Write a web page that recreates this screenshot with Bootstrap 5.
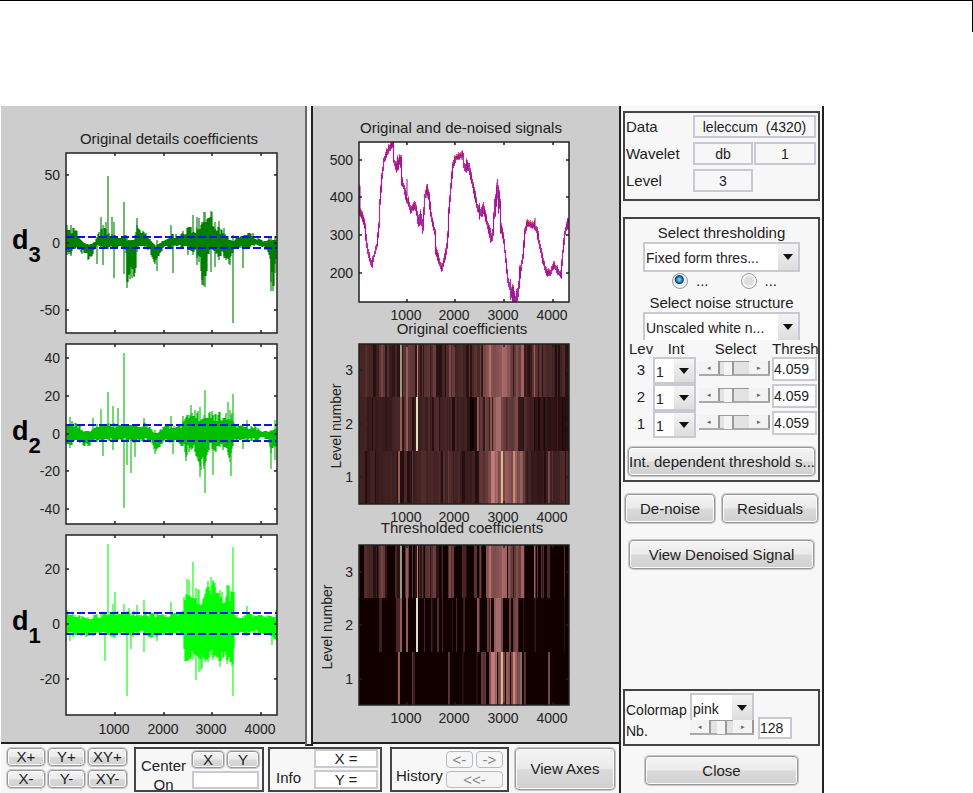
<!DOCTYPE html>
<html lang="en">
<head>
<meta charset="utf-8">
<meta name="viewport" content="width=device-width, initial-scale=1">
<title>Wavelet 1-D De-noising</title>
<link href="https://cdn.jsdelivr.net/npm/bootstrap@5.3.0/dist/css/bootstrap.min.css" rel="stylesheet">
<style>
body{font-family:"Liberation Sans",Arial,sans-serif;font-size:15px;line-height:18px;color:#222;background:#fff}
.page-rule{height:32px;border-top:1px solid #000;border-right:1px solid #000;margin-bottom:74px}
.tool{margin:0 149px 0 1px}
.work-area{min-width:0}
.plots{background:#cdcdcd}
.plots svg{display:block;width:100%;height:auto}
.plot-col-a{flex:304 1 0;min-width:0}
.plot-col-b{flex:306 1 0;min-width:0}
.splitter{flex:0 0 8px;background:#f7f7f7;border:solid #222;border-width:0 2px 2px;border-left-color:#666;margin-bottom:-4px;z-index:1}
.chart text{font-size:14px;fill:#222}
.chart .chart-title{font-size:15px;text-anchor:middle}
.chart .big{font-size:27px;font-weight:bold;fill:#000}
.side{flex:0 0 205px;min-width:0;background:#f7f7f7;border:solid #222;border-width:0 2px;padding:5px 2px 8px 2px}
.frame{border:2px solid #444}
.toolbar-row{background:#f7f7f7;border-top:2px solid #222;padding:3px 4px 2px 5px;height:51px}
.toolbar-row .frame{height:45px}
.mbtn{border:1px solid #999;border-radius:4px;box-shadow:inset 0 0 0 1px #fcfcfc,0 0 0 1px #c8c8c8;background:linear-gradient(#f4f4f4,#ebebeb 48%,#dadada 52%,#d0d0d0);color:#222;padding:0 4px;font-size:15px;line-height:16px;white-space:nowrap;text-align:center}
.mbtn:disabled{background:#f5f5f5;border-color:#b5bcc2;box-shadow:none;color:#888}
.h-sm{height:18px}
.h-lg{height:29px}
.pad-grid{display:grid;grid-template-columns:38px 37px 39px;gap:4px 3px;width:122px;padding:1px}
.fld{border:2px solid #c9c9d3;background:#fff;color:#222;font-size:15px;line-height:16px;padding:0 2px;min-width:0;border-radius:0}
.fld-flat{background:#f7f7f7;font-size:14px;text-align:center;height:23px}
.info-grid{display:grid;grid-template-columns:66px 60px 62px;row-gap:4px;column-gap:1px;align-items:center;padding:2px 0 7px 1px}
.info-grid .wide{grid-column:2/4}
.pop{appearance:none;border:2px solid #c9c9d3;color:#222;font-size:14px;line-height:18px;padding:2px 20px 0 1px;border-radius:0;
background:url("data:image/svg+xml,%3Csvg xmlns='http://www.w3.org/2000/svg' viewBox='0 0 10 6'%3E%3Cpath d='M0 0h10L5 6z' fill='%23111'/%3E%3C/svg%3E") right 5px center/10px 6px no-repeat,linear-gradient(#f4f4f4,#ddd) right/20px 100% no-repeat,#fff}
.pop-lg{width:157px;height:30px}
.pop-clip{height:28px;border-bottom-width:0}
.pop-sm{width:43px;height:27px;display:block}
.lev{width:188px;table-layout:fixed;margin-left:4px}
.lev th{font-weight:400;padding:0;height:17px;line-height:16px}
.lev td{padding:0;height:27px;vertical-align:top}
.lev .fld{width:45px;height:24px;font-size:14px;padding:0}
.lev .step{margin-top:4px}
.step{display:flex;height:15px;width:71px;border-bottom:2px solid #aaa}
.step button{border:0;background:#f3f3f3;width:21px;padding:0;font-size:7px;line-height:12px;color:#666;border-right:2px solid #999}
.step input{appearance:none;width:29px;height:13px;margin:0;background:#e3e3e3;border-top:1px solid #999}
.step input::-webkit-slider-thumb{appearance:none;width:10px;height:13px;background:#f4f4f4;border-right:2px solid #999;border-radius:0}
.radio-row{height:18px;gap:8px;padding-left:47px}
.radio-row input{appearance:none;width:16px;height:16px;margin:0;border:1px solid #999;border-radius:50%;background:radial-gradient(circle,#ddd 0 4px,#f8f8f8 6px)}
.radio-row input:checked{background:radial-gradient(circle at 45% 40%,#6cc8ee 0 1px,#1672a8 3px,#123f5e 4px,#eee 5px)}
.radio-row label{line-height:16px}
.center-box{width:130px;margin-left:6px;padding:2px 3px 0 5px;justify-content:space-between}
.center-box label{line-height:19px;padding-top:5px}
.pair-grid{display:grid;gap:3px}
.center-box .pair-grid{grid-template-columns:32px 32px;grid-template-rows:17px 18px}
.center-box .mbtn,.hist-box .mbtn{line-height:14px;padding:0}
.center-box .fld{grid-column:1/3;width:100%}
.info-box{width:114px;margin-left:4px;padding:0 2px 0 6px}
.info-box span,.hist-box span{padding-bottom:3px}
.info-box .d-flex{gap:2px;padding-bottom:1px}
.info-box .fld{width:64px;height:19px}
.hist-box{width:119px;margin-left:8px;padding:0 4px 2px 4px}
.hist-box .pair-grid{grid-template-columns:27px 27px;grid-template-rows:17px 17px}
.hist-box .wide-btn{grid-column:1/3}
.view-axes{height:42px;margin:1px 0 0 6px}
.thr-frame{margin-top:16px;padding:5px 0 4px;height:265px}
.noise-label{margin-top:4px}
.wide-label{margin:auto 3px 0;overflow:hidden}
.act-row{gap:7px;margin:12px 2px 0}
.act-row .mbtn{flex-basis:0}
.view-sig{margin:17px 6px 0}
.cm-frame{height:57px;padding:2px 0 0 1px}
.cm-grid{display:grid;grid-template-columns:62px 63px 34px;column-gap:2px}
.cm-grid .pop{width:64px;height:29px}
.cm-grid label{font-size:14px}
.cm-grid .step{width:64px;margin-top:-2px}
.cm-grid .step input{width:22px}
.cm-grid .fld{width:34px;height:22px;margin:-5px 0 0 3px;font-size:14px;padding:0}
.close-btn{margin:10px 22px 0}
</style>
</head>
<body>
<div class="page-rule"></div>
<main class="tool d-flex align-items-stretch">
  <div class="work-area flex-grow-1 d-flex flex-column">
    <section class="plots d-flex align-items-stretch" aria-label="Plots">
      <div class="plot-col-a"><svg id="details" class="chart" viewBox="1 106 304 636" role="img" aria-label="Details coefficients"></svg></div>
      <div class="splitter"></div>
      <div class="plot-col-b"><svg id="signals" class="chart" viewBox="313 106 306 636" role="img" aria-label="Signals and coefficients"></svg></div>
    </section>
    <div class="toolbar-row d-flex align-items-start">
      <div class="pad-grid flex-shrink-0">
        <button class="mbtn h-sm">X+</button><button class="mbtn h-sm">Y+</button><button class="mbtn h-sm px-0">XY+</button>
        <button class="mbtn h-sm">X-</button><button class="mbtn h-sm">Y-</button><button class="mbtn h-sm px-0">XY-</button>
      </div>
      <div class="frame center-box d-flex">
        <label for="centerOn" class="text-center">Center<br>On</label>
        <div class="pair-grid"><button class="mbtn">X</button><button class="mbtn">Y</button><input id="centerOn" class="fld"></div>
      </div>
      <div class="frame info-box d-flex align-items-end justify-content-between">
        <span>Info</span>
        <div class="d-flex flex-column"><input class="fld text-center" aria-label="X value" value="X ="><input class="fld text-center" aria-label="Y value" value="Y ="></div>
      </div>
      <div class="frame hist-box d-flex align-items-end justify-content-between">
        <span>History</span>
        <div class="pair-grid"><button class="mbtn" disabled>&lt;-</button><button class="mbtn" disabled>-&gt;</button><button class="mbtn wide-btn" disabled>&lt;&lt;-</button></div>
      </div>
      <button class="mbtn view-axes flex-grow-1">View Axes</button>
    </div>
  </div>
  <aside class="side d-flex flex-column">
    <div class="frame info-grid">
      <label for="dat">Data</label><input id="dat" class="fld fld-flat wide" value="leleccum  (4320)" readonly>
      <label for="wav">Wavelet</label><input id="wav" class="fld fld-flat" value="db" readonly><input class="fld fld-flat" aria-label="Wavelet order" value="1" readonly>
      <label for="lvl">Level</label><input id="lvl" class="fld fld-flat" value="3" readonly>
    </div>
    <div class="frame thr-frame d-flex flex-column">
      <label for="thr" class="text-center">Select thresholding</label>
      <select id="thr" class="pop pop-lg mx-auto"><option>Fixed form thres...</option></select>
      <div class="radio-row d-flex align-items-center">
        <input type="radio" name="mode" id="soft" checked><label for="soft">...</label>
        <input type="radio" name="mode" id="hard" class="ms-4"><label for="hard">...</label>
      </div>
      <label for="noise" class="text-center noise-label">Select noise structure</label>
      <select id="noise" class="pop pop-lg pop-clip mx-auto"><option>Unscaled white n...</option></select>
      <table class="lev text-center">
        <colgroup><col style="width:24px"><col style="width:46px"><col style="width:73px"><col style="width:45px"></colgroup>
        <thead><tr><th>Lev</th><th>Int</th><th>Select</th><th>Thresh</th></tr></thead>
        <tbody id="levels"></tbody>
      </table>
      <button class="mbtn h-lg wide-label px-0">Int. dependent threshold s...</button>
    </div>
    <div class="d-flex act-row"><button class="mbtn h-lg flex-fill">De-noise</button><button class="mbtn h-lg flex-fill">Residuals</button></div>
    <button class="mbtn h-lg view-sig">View Denoised Signal</button>
    <div class="frame cm-frame mt-auto">
      <div class="cm-grid">
        <label for="cmap" class="pt-2">Colormap</label><select id="cmap" class="pop"><option>pink</option></select><span></span>
        <label for="nb">Nb.</label><div class="step"><button aria-label="Fewer">◂</button><input type="range" aria-label="Number of colours"><button aria-label="More">▸</button></div><input id="nb" class="fld" value="128">
      </div>
    </div>
    <button class="mbtn h-lg close-btn">Close</button>
  </aside>
</main>
<script src="https://cdn.jsdelivr.net/npm/bootstrap@5.3.0/dist/js/bootstrap.bundle.min.js"></script>
<script>
document.getElementById('levels').innerHTML = [3, 2, 1].map(n =>
  `<tr><td class="pt-1">${n}</td><td><select class="pop pop-sm" aria-label="Intervals, level ${n}"><option>1</option></select></td>
  <td><div class="step"><button aria-label="Lower">◂</button><input type="range" value="20" aria-label="Threshold, level ${n}"><button aria-label="Raise">▸</button></div></td>
  <td><input class="fld" aria-label="Threshold value, level ${n}" value="4.059"></td></tr>`).join('');

let seed = 11;
const rnd = () => (seed = (seed * 16807) % 2147483647) / 2147483647;
const rect = (x, y, w, h, f) => `<rect x="${x}" y="${y}" width="${w}" height="${h}" fill="${f}" shape-rendering="crispEdges"/>`;
const text = (x, y, s, anchor = 'middle', cls = '') => `<text x="${x}" y="${y}" text-anchor="${anchor}" class="${cls}">${s}</text>`;
const lerp = (pts, x, k) => {
  let i = 0;
  while (i < pts.length - 2 && pts[i + 1][0] <= x) i++;
  const [a, b] = [pts[i], pts[i + 1]], t = Math.min(1, Math.max(0, (x - a[0]) / (b[0] - a[0])));
  return a[k] + (b[k] - a[k]) * t;
};

// Box, tick marks and tick labels of one axes
function axes(x0, y0, x1, y1, xt, yt, xLabelY) {
  let d = '', s = '';
  xt.forEach((x, i) => {
    d += `M${x} ${y0}v3M${x} ${y1}v-3`;
    if (xLabelY) s += text(x - 1, xLabelY, (i + 1) * 1000);
  });
  yt.forEach(([y, l]) => { d += `M${x0} ${y}h3M${x1} ${y}h-3`; s += text(x0 - 6, y + 5, l, 'end'); });
  return `<path d="M${x0} ${y0}H${x1}V${y1}H${x0}z${d}" fill="none" stroke="#222" stroke-width="1.5"/>` + s;
}

// One row of detail coefficients: envelope [x, top, bottom], then spikes [x, top, bottom]
function detail(cfg) {
  const [y0, y1] = cfg.box;
  let s = rect(66, y0, 211, y1 - y0, '#fff'), core = '', faint = '';
  let ja = 0, jb = 0;
  for (let x = 67; x < 277; x++) {
    const a = lerp(cfg.env, x, 1), b = lerp(cfg.env, x, 2), j = cfg.jit;
    if (rnd() < .6) ja = rnd();
    if (rnd() < .6) jb = rnd();
    core += `M${x} ${Math.round(cfg.zero - (cfg.zero - a) * (1 - j * ja))}V${Math.round(cfg.zero + (b - cfg.zero) * (1 - j * jb))}`;
  }
  cfg.spikes.forEach(([x, a, b]) => faint += `M${x} ${a}V${b}`);
  s += `<path d="${core}" stroke="${cfg.color}" stroke-width="1.2" fill="none"/><path d="${faint}" stroke="${cfg.color}" stroke-opacity=".75" stroke-width="1.5" fill="none"/>`;
  s += `<path d="M66 ${cfg.thr[0]}H277M66 ${cfg.thr[1]}H277" stroke="#1111f0" stroke-width="2" stroke-dasharray="8 3" fill="none"/>`;
  s += axes(66, y0, 277, y1, [115, 164, 212, 261], cfg.ticks, cfg.labelY);
  return s + `<text x="12" y="${cfg.nameY}" class="big">d<tspan dy="13" font-size="22">${cfg.n}</tspan></text>`;
}

document.getElementById('details').innerHTML =
  text(169, 144, 'Original details coefficients', 'middle', 'chart-title') +
  detail({ n: 3, color: '#008000', box: [153, 333], zero: 243, thr: [237, 248], nameY: 249, jit: .6, ticks: [[175, 50], [243, 0], [310, -50]],
    env: [[66,225,256],[73,225,254],[77,230,252],[80,236,250],[84,243,263],[88,245,263],[92,244,257],[96,238,248],[100,228,248],[105,228,250],[112,233,249],[118,236,248],[124,235,252],[126,234,254],[127,238,284],[134,238,282],[136,224,272],[137,220,250],[142,227,249],[147,234,248],[151,240,258],[156,247,268],[160,243,254],[165,238,247],[172,232,248],[180,235,247],[186,226,251],[194,222,255],[200,218,262],[203,212,290],[206,211,290],[208,212,258],[212,210,256],[215,218,262],[219,226,258],[226,232,262],[231,240,272],[234,240,254],[240,232,249],[250,230,249],[256,236,246],[262,240,248],[268,238,254],[270,236,262],[271,238,290],[274,238,290],[276,240,272]],
    spikes: [[67,225,250],[71,225,256],[97,240,264],[101,217,248],[103,225,265],[106,222,245],[108,176,245],[112,217,246],[114,222,278],[124,202,274],[127,236,288],[130,240,279],[132,240,278],[134,240,276],[137,218,252],[157,240,271],[171,225,246],[173,235,273],[188,227,255],[193,215,255],[197,217,265],[199,218,262],[202,222,285],[204,212,286],[205,212,287],[208,222,245],[211,211,272],[215,222,267],[219,221,260],[224,228,258],[230,240,265],[233,235,323],[243,236,268],[271,236,291],[273,240,291],[275,236,273]] }) +
  detail({ n: 2, color: '#00bf00', box: [344, 524], zero: 434, thr: [425, 441], nameY: 440, jit: .5, ticks: [[358, 40], [396, 20], [434, 0], [471, -20], [509, -40]],
    env: [[66,420,444],[72,420,446],[78,424,442],[84,431,446],[90,430,448],[96,424,442],[104,423,442],[112,422,442],[120,424,440],[132,424,445],[144,422,442],[150,427,443],[154,433,454],[158,432,450],[163,425,444],[175,425,443],[183,422,447],[186,416,460],[190,408,452],[196,410,456],[201,410,478],[205,409,465],[210,409,450],[216,411,454],[222,412,454],[228,411,458],[232,411,462],[235,423,443],[242,425,442],[252,424,441],[262,430,440],[268,431,441],[271,430,457],[274,428,454],[276,426,452]],
    spikes: [[70,417,448],[93,418,440],[101,409,440],[103,425,456],[108,392,440],[113,406,450],[118,408,440],[124,353,508],[127,424,465],[131,430,473],[135,425,457],[144,418,440],[155,430,454],[171,416,440],[173,430,454],[183,416,440],[186,420,461],[191,405,450],[200,407,477],[204,415,469],[205,390,493],[213,415,475],[228,402,455],[230,410,462],[231,415,476],[233,394,440],[243,425,449],[247,420,440],[271,430,469],[275,420,460]] }) +
  detail({ n: 1, color: '#00ff00', box: [535, 715], zero: 624, thr: [613, 634], nameY: 630, labelY: 734, jit: .4, ticks: [[569, 20], [624, 0], [679, -20]],
    env: [[66,610,635],[72,611,637],[78,614,636],[84,617,638],[94,615,636],[102,613,634],[112,609,637],[122,611,635],[132,611,638],[142,613,634],[154,612,639],[165,614,635],[176,611,635],[183,611,637],[184,596,662],[187,588,662],[190,592,660],[196,596,664],[202,598,672],[206,586,664],[210,576,660],[214,580,660],[216,590,666],[219,590,670],[223,590,670],[228,584,668],[231,588,668],[234,588,664],[235,614,638],[240,615,635],[250,613,634],[262,613,635],[270,615,636],[274,616,642],[276,617,642]],
    spikes: [[70,615,641],[105,620,661],[108,544,634],[113,604,632],[115,592,638],[124,604,634],[127,620,696],[129,608,634],[131,620,649],[137,605,634],[144,600,652],[157,620,641],[171,602,634],[187,579,661],[189,580,655],[193,562,660],[196,588,680],[198,589,655],[199,590,672],[202,610,668],[211,577,655],[213,580,660],[215,583,655],[220,590,667],[227,585,664],[233,547,696],[247,606,636],[272,620,645],[276,610,640]] });

// Original and de-noised signals
const sig = [[359,186],[360,212],[363,217],[365,226],[367,245],[369,255],[372,264],[374,255],[377,244],[379,225],[380,200],[382,175],[384,160],[387,151],[390,147],[391,144],[393,143],[394,160],[396,166],[399,160],[401,158],[402,180],[404,186],[406,195],[409,203],[411,210],[415,203],[417,212],[419,223],[421,216],[423,228],[425,195],[427,188],[429,195],[430,205],[432,220],[435,232],[436,250],[439,260],[442,267],[446,252],[448,235],[449,210],[451,185],[453,165],[456,156],[460,155],[463,154],[464,165],[468,165],[471,175],[474,190],[477,205],[480,213],[484,208],[487,222],[491,237],[493,232],[495,200],[498,190],[500,205],[501,225],[504,240],[506,260],[508,280],[510,287],[514,298],[518,293],[520,275],[523,255],[525,230],[527,223],[534,224],[537,230],[540,245],[543,260],[547,273],[550,272],[554,264],[558,270],[561,275],[563,250],[565,232],[568,220]];
const rough = x => (x > 393 && x < 402) || (x > 416 && x < 424) || (x > 478 && x < 486) || (x > 463 && x < 470) ? 6 : (x > 494 && x < 501) ? 14 : (x > 509 && x < 520) ? 9 : (x > 488 && x < 494) ? 6 : 2;
let red = '', vio = '';
for (let x = 359; x < 569; x++) {
  const y = Math.round(lerp(sig, x, 1)), y2 = Math.round(lerp(sig, x + 1, 1)), r = rough(x);
  const a = Math.max(142, Math.min(y, y2) - r * rnd()), b = Math.min(300, Math.max(y, y2) + r * rnd());
  if (rnd() < .6) red += `M${x + .5} ${Math.max(142, a - 2).toFixed(0)}V${Math.min(302, b + 3).toFixed(0)}`;
  vio += `M${x + .5} ${a.toFixed(0)}V${(b + 2).toFixed(0)}`;
}
[[360,186,215],[407,179,196],[427,184,198],[462,151,160],[497,182,200],[535,218,228],[568,218,230]].forEach(([x, a, b]) => vio += `M${x} ${a}V${b}`);

// Coefficient images: intensity control points and fixed bands [x, width, colour] per level
const levels = [
  { env: [[359,.35],[372,.4],[376,.25],[380,.6],[385,.5],[390,.18],[397,.4],[404,.5],[412,.45],[424,.5],[432,.55],[440,.3],[446,.35],[449,.6],[455,.35],[470,.4],[480,.5],[488,.7],[498,.85],[506,.85],[514,.6],[520,.7],[524,.55],[527,.25],[535,.5],[545,.4],[555,.3],[569,.4]],
    bands: [[400,2,'#9a9c7b'],[406,2,'#945b5b'],[417,1,'#c37a7a'],[489,2,'#b56e6e'],[503,4,'#a56464'],[521,3,'#9f6262'],[534,1,'#a06161']],
    lit: [[359,1],[364,6],[370,7],[378,9],[395,5],[400,2],[405,4],[412,1],[415,3],[419,5],[425,14],[441,2],[448,6],[462,5],[474,3],[479,3],[486,21],[508,12],[520,5],[534,2],[537,1],[541,3],[547,3],[564,1]] },
  { env: [[359,.28],[375,.25],[386,.25],[395,.35],[401,.5],[407,.45],[416,.25],[430,.38],[450,.32],[465,.32],[469,.1],[474,.35],[480,.45],[488,.6],[494,.8],[502,.8],[506,.45],[516,.6],[526,.4],[537,.2],[555,.18],[569,.15]],
    bands: [[400,2,'#8b6553'],[406,2,'#955b5b'],[416,2,'#dde2c4'],[470,4,'#120000'],[477,2,'#8e5656'],[496,5,'#a56a6a'],[557,1,'#4a1414']],
    lit: [[379,3],[396,2],[398,4],[406,2],[416,2],[424,1],[431,2],[437,2],[442,1],[452,1],[456,1],[463,2],[477,3],[487,4],[494,9],[509,2],[513,6],[523,1],[534,2],[564,1]] },
  { env: [[359,.3],[380,.28],[395,.32],[402,.35],[410,.3],[430,.35],[445,.35],[460,.32],[475,.3],[482,.5],[488,.7],[495,.9],[502,.85],[507,.65],[514,.8],[521,.65],[527,.28],[540,.25],[548,.38],[569,.35]],
    bands: [[398,2,'#8f5e52'],[412,1,'#58383c'],[448,1,'#60383a'],[491,4,'#c07a7a'],[501,2,'#dcb884'],[513,2,'#c98a74'],[520,2,'#8b6b58'],[548,2,'#74484a']],
    lit: [[397,3],[412,3],[448,2],[462,2],[476,2],[481,5],[489,8],[498,7],[506,4],[511,8],[519,3],[524,2],[548,2]] }
];
const pink = v => `rgb(${Math.round(18 + 160 * v)},${Math.round(112 * v)},${Math.round(112 * v)})`;
function images(topA, topB, h) {
  let s = rect(359, topA, 210, 160, '#120000') + rect(359, topB, 210, 160, '#120000');
  levels.forEach((L, r) => {
    const y = Math.round(r * h), hh = Math.round((r + 1) * h) - y;
    let w;
    for (let x = 359; x < 569; x += w) {
      w = Math.min(569 - x, 1 + Math.floor(rnd() * 3));
      const c = pink(Math.min(1, lerp(L.env, x, 1) * (rnd() < .16 ? .4 : .75 + .4 * rnd())));
      s += rect(x, topA + y, w, hh, c);
      for (let k = x; k < x + w; k++)
        if (L.lit.some(([a, n]) => k >= a && k < a + n)) s += rect(k, topB + y, 1, hh, c);
    }
    L.bands.forEach(([x, n, c]) => {
      s += rect(x, topA + y, n, hh, c);
      if (L.lit.some(([a, m]) => x >= a && x < a + m)) s += rect(x, topB + y, n, hh, c);
    });
  });
  return s;
}
const xt = [407, 455, 504, 553];
document.getElementById('signals').innerHTML =
  text(461, 133, 'Original and de-noised signals', 'middle', 'chart-title') +
  rect(359, 142, 210, 160, '#fff') +
  `<path d="${red}" stroke="#ff2030" stroke-opacity=".8" fill="none"/><path d="${vio}" stroke="#90109c" stroke-width="1.2" stroke-opacity=".85" fill="none"/>` +
  axes(359, 142, 569, 302, xt, [[160, 500], [197, 400], [235, 300], [273, 200]], 320) +
  text(462, 334, 'Original coefficients', 'middle', 'chart-title') +
  images(344, 545, 160 / 3) +
  axes(359, 344, 569, 504, xt, [[370, 3], [424, 2], [477, 1]], 522) +
  text(462, 533, 'Thresholded coefficients', 'middle', 'chart-title') +
  axes(359, 545, 569, 705, xt, [[572, 3], [625, 2], [679, 1]], 723) +
  `<text transform="translate(341 426) rotate(-90)" text-anchor="middle">Level number</text><text transform="translate(332 627) rotate(-90)" text-anchor="middle">Level number</text>`;
</script>
</body>
</html>
